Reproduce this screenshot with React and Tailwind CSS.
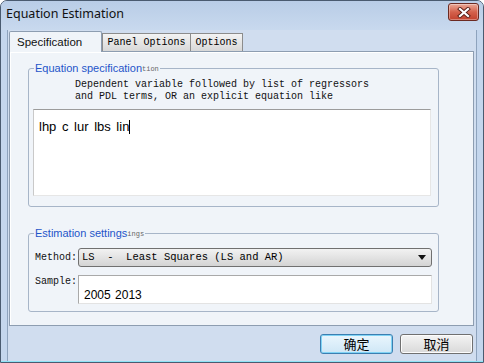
import React from 'react';

const mono = { fontFamily: '"Liberation Mono", "Courier New", monospace' };
const sans = { fontFamily: '"Noto Sans", "Segoe UI", sans-serif' };
const arial = { fontFamily: '"Liberation Sans", Arial, sans-serif' };
const cjk = { fontFamily: '"Noto Sans CJK SC", "Noto Sans", sans-serif' };

const CloseButton = () => (
  <div className="w-[31px] h-[18px] rounded-[3px] border border-[#6b2a22] bg-gradient-to-b from-[#e9a897] via-[#d4614c] to-[#c2412d] flex items-center justify-center shadow-[inset_0_0_0_1px_rgba(255,255,255,0.35)]">
    <svg width="14" height="11" viewBox="0 0 14 11">
      <path d="M3 2 L11 9 M11 2 L3 9" stroke="#5a1e16" strokeWidth="4" strokeLinecap="square" />
      <path d="M3 2 L11 9 M11 2 L3 9" stroke="#ffffff" strokeWidth="2.2" strokeLinecap="square" />
    </svg>
  </div>
);

const GroupBox = ({ label, ghost, className, children }) => (
  <div className={`relative border border-[#a7b5c8] rounded-[3px] ${className}`}>
    <div className="absolute -top-[9px] left-[5px] flex items-end bg-[#f0f4f9] pr-[1px]">
      <span className="text-[11px] leading-[16px] text-[#1f54c9] pl-[1px]" style={arial}>
        {label}
      </span>
      <span className="text-[7px] leading-[9px] text-[#666] pb-[2px]" style={mono}>
        {ghost}
      </span>
    </div>
    {children}
  </div>
);

const Button = ({ children, primary }) => (
  <div
    className={`w-[73px] h-[20px] rounded-[3px] border flex items-center justify-center text-[13px] text-black bg-gradient-to-b ${
      primary
        ? 'border-[#3c7fb1] from-[#eaf6fd] to-[#cfe7f6] shadow-[inset_0_0_0_1px_#7fd3f5]'
        : 'border-[#707070] from-[#f4f4f4] to-[#d9d9d9] shadow-[inset_0_0_0_1px_#fcfcfc]'
    }`}
    style={cjk}
  >
    {children}
  </div>
);

export default function App() {
  return (
    <div className="w-[484px] h-[363px] flex flex-col bg-[#c4d6ed] border border-[#4a5b70] rounded-t-[7px] overflow-hidden">
      {/* Title bar */}
      <div className="h-[29px] shrink-0 flex items-center justify-between pl-[5px] pr-[4px] bg-gradient-to-b from-[#b9cde7] to-[#c8d9ee]">
        <span className="text-[12.5px] text-[#111] -mt-[2px]" style={sans}>
          Equation Estimation
        </span>
        <div className="-mt-[7px]">
          <CloseButton />
        </div>
      </div>

      {/* Client area */}
      <div className="flex-1 mx-[6px] flex flex-col bg-[#d0ddef] border-l border-r border-[#8ea3bd] pl-[1px] pr-[2px] pt-[1px]">
        {/* Tabs */}
        <div className="flex items-end h-[20px]">
          <div
            className="relative z-10 w-[93px] h-[21px] -mb-px bg-[#f0f4f9] border border-b-0 border-[#8d9db1] rounded-t-[2px] flex items-start pl-[7px] pt-[2px] text-[11.5px] text-[#111]"
            style={arial}
          >
            Specification
          </div>
          <div
            className="w-[89px] h-[18px] border border-[#8c8c8c] border-b-0 bg-gradient-to-b from-[#f3f3f3] to-[#d8d8d8] flex items-center justify-center text-[10px] text-black"
            style={mono}
          >
            Panel Options
          </div>
          <div
            className="w-[52px] h-[18px] border border-l-0 border-b-0 border-[#8c8c8c] bg-gradient-to-b from-[#f3f3f3] to-[#d8d8d8] flex items-center justify-center text-[10px] text-black"
            style={mono}
          >
            Options
          </div>
        </div>

        {/* Panel */}
        <div className="h-[275px] bg-[#f0f4f9] border border-[#8d9db1] shadow-[inset_1px_1px_0_#ffffff] pl-[18px] pr-[34px] pt-[16px]">
          <GroupBox label="Equation specification" ghost="tion" className="h-[139px] pt-[10px]">
            <div className="pl-[46px] text-[10px] leading-[12px] text-[#111]" style={mono}>
              <div>Dependent variable followed by list of regressors</div>
              <div>and PDL terms, OR an explicit equation like</div>
            </div>
            <div className="ml-[4px] mt-[6px] w-[398px] h-[87px] bg-white border-t border-l border-t-[#9c9c9c] border-l-[#c9c9c9] border-r border-b border-r-[#e6e6e6] border-b-[#e6e6e6] px-[5px] pt-[3px]">
              <span className="text-[13px] [word-spacing:2px] text-black" style={arial}>
                lhp c lur lbs lin
              </span>
              <span className="inline-block w-px h-[14px] bg-black align-[-3px]" />
            </div>
          </GroupBox>

          <GroupBox label="Estimation settings" ghost="ings" className="mt-[26px] h-[79px] pt-[14px] pl-[6px]">
            <div className="flex items-center">
              <span className="w-[43px] text-[10px] text-[#111]" style={mono}>
                Method:
              </span>
              <div
                className="w-[354px] h-[19px] rounded-[3px] border border-[#707070] bg-gradient-to-b from-[#f2f2f2] to-[#d4d4d4] flex items-center justify-between pl-[3px] pr-[5px] text-[10.5px] text-black whitespace-pre"
                style={mono}
              >
                <span>LS  -  Least Squares (LS and AR)</span>
                <svg width="8" height="5" viewBox="0 0 8 5">
                  <path d="M0 0 H8 L4 5 Z" fill="#111" />
                </svg>
              </div>
            </div>
            <div className="flex items-start mt-[8px]">
              <span className="w-[43px] text-[10px] leading-[12px] pt-[1px] text-[#111]" style={mono}>
                Sample:
              </span>
              <div className="w-[354px] h-[29px] bg-white border border-[#a9a9a9] border-r-[#e3e3e3] border-b-[#e3e3e3] pl-[5px] pt-[5px]">
                <span className="text-[12px] [word-spacing:1px] text-black" style={arial}>
                  2005 2013
                </span>
              </div>
            </div>
          </GroupBox>
        </div>

        {/* Buttons */}
        <div className="flex justify-end gap-[7px] mt-[8px] pr-[1px]">
          <Button primary>确定</Button>
          <Button>取消</Button>
        </div>
        <div className="flex-1" />
      </div>
      <div className="h-[1px] bg-[#8ee3f5] shrink-0" />
    </div>
  );
}
